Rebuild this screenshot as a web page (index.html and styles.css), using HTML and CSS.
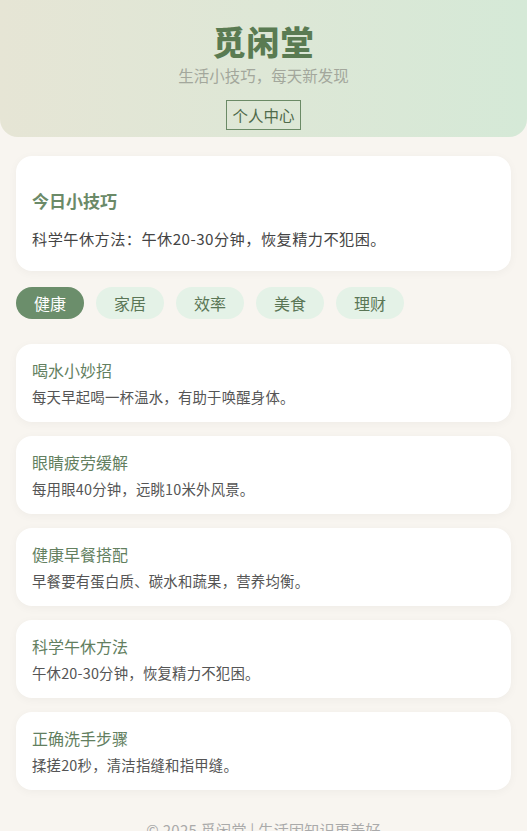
FILE: index.html
```html
<!DOCTYPE html>
<html lang="zh-CN">
<head>
<meta charset="utf-8">
<title>觅闲堂</title>
<link rel="stylesheet" href="styles.css">
</head>
<body>
<header class="hero">
  <h1 class="brand">觅闲堂</h1>
  <p class="slogan">生活小技巧，每天新发现</p>
  <a class="profile-btn">个人中心</a>
</header>
<main class="content">
  <section class="today">
    <h3 class="today-title">今日小技巧</h3>
    <p class="today-text">科学午休方法：午休20-30分钟，恢复精力不犯困。</p>
  </section>
  <nav class="tabs">
    <span class="tab active">健康</span>
    <span class="tab">家居</span>
    <span class="tab">效率</span>
    <span class="tab">美食</span>
    <span class="tab">理财</span>
  </nav>
  <ul class="tips">
    <li class="tip"><h4 class="tip-title">喝水小妙招</h4><p class="tip-desc">每天早起喝一杯温水，有助于唤醒身体。</p></li>
    <li class="tip"><h4 class="tip-title">眼睛疲劳缓解</h4><p class="tip-desc">每用眼40分钟，远眺10米外风景。</p></li>
    <li class="tip"><h4 class="tip-title">健康早餐搭配</h4><p class="tip-desc">早餐要有蛋白质、碳水和蔬果，营养均衡。</p></li>
    <li class="tip"><h4 class="tip-title">科学午休方法</h4><p class="tip-desc">午休20-30分钟，恢复精力不犯困。</p></li>
    <li class="tip"><h4 class="tip-title">正确洗手步骤</h4><p class="tip-desc">揉搓20秒，清洁指缝和指甲缝。</p></li>
  </ul>
</main>
<footer class="footer">© 2025 觅闲堂 | 生活因知识更美好</footer>
</body>
</html>
```
FILE: styles.css
```css
* { box-sizing: border-box; }
html, body {
  margin: 0;
  padding: 0;
}
body {
  background: #f8f5f0;
  font-family: "Noto Sans CJK SC", "Noto Sans", sans-serif;
  color: #444;
}
.hero {
  background: linear-gradient(90deg, #e6e5d5 0%, #d5e9d7 100%);
  border-radius: 0 0 18px 18px;
  height: 137px;
  padding-top: 20px;
  display: flex;
  flex-direction: column;
  align-items: center;
}
.brand {
  margin: 0;
  font-size: 33px;
  line-height: 42px;
  font-weight: 900;
  color: #5a7b52;
  letter-spacing: 1px;
}
.slogan {
  margin: 1px 0 0;
  font-size: 15.5px;
  line-height: 24px;
  color: #a3a79c;
}
.profile-btn {
  margin-top: 13px;
  border: 1px solid #6b8a66;
  padding: 0 5px;
  height: 30px;
  line-height: 28px;
  font-size: 15.5px;
  color: #4f6a4b;
}
.content {
  padding: 19px 16px 0;
}
.today {
  background: #fff;
  border-radius: 16px;
  padding: 20px 16px 22px;
  box-shadow: 0 2px 10px rgba(0, 0, 0, 0.04);
}
.today-title {
  margin: 12px 0 14px;
  font-size: 17px;
  line-height: 25px;
  font-weight: 700;
  color: #6b8a68;
}
.today-text {
  margin: 0;
  font-size: 15.2px;
  line-height: 22px;
  letter-spacing: 0.45px;
  color: #444;
}
.tabs {
  display: flex;
  gap: 12px;
  margin: 16px 0 25px;
}
.tab {
  height: 32px;
  line-height: 32px;
  padding: 0 18px;
  border-radius: 16px;
  background: #e4f2e7;
  color: #5a7656;
  font-size: 16px;
}
.tab.active {
  background: #6b8e6b;
  color: #fff;
}
.tips {
  list-style: none;
  margin: 0;
  padding: 0;
  display: flex;
  flex-direction: column;
  gap: 14px;
}
.tip {
  background: #fff;
  border-radius: 16px;
  padding: 14px 16px 16px;
  height: 78px;
  box-shadow: 0 2px 10px rgba(0, 0, 0, 0.04);
}
.tip-title {
  margin: 0 0 5px;
  font-size: 16px;
  line-height: 24px;
  font-weight: 400;
  color: #637f5f;
}
.tip-desc {
  margin: 0;
  font-size: 14.4px;
  line-height: 20px;
  letter-spacing: 0.2px;
  color: #555;
}
.footer {
  margin-top: 29px;
  text-align: center;
  font-size: 15px;
  line-height: 22px;
  letter-spacing: 0.3px;
  color: #aaa;
  padding-bottom: 20px;
}
```
